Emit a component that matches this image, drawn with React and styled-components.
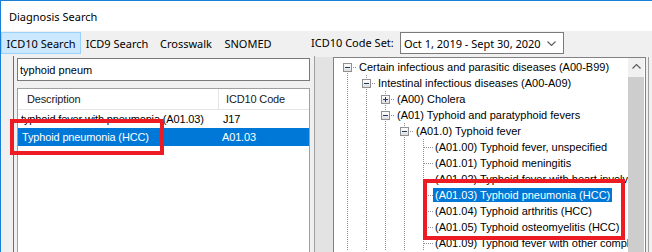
import React from 'react'
import styled, { createGlobalStyle } from 'styled-components'

const GlobalStyle = createGlobalStyle`
  html, body { margin: 0; padding: 0; background: #fff; overflow: hidden; }
  * { box-sizing: border-box; }
`

const uiFont = `"Noto Sans", "Liberation Sans", sans-serif`
const winFont = `"Liberation Sans", Arial, sans-serif`
const dots = '#8f8f8f'

const Screen = styled.div`
  position: relative;
  width: 652px;
  height: 252px;
  overflow: hidden;
`

const Window = styled.div`
  width: 652px;
  height: 252px;
  border-top: 1px solid #1a7fd6;
  border-left: 1px solid #1a7fd6;
  display: flex;
  flex-direction: column;
  background: #fff;
  color: #000;
`

const TitleBar = styled.div`
  height: 30px;
  flex: none;
  display: flex;
  align-items: center;
  padding-left: 8px;
  font: 11px ${uiFont};
`

const Toolbar = styled.div`
  height: 25px;
  flex: none;
  display: flex;
  align-items: flex-start;
  padding-top: 1px;
  background: #f0f0f0;
  font: 11px ${uiFont};
`

const Tab = styled.div`
  width: ${p => p.$w}px;
  height: 22px;
  display: flex;
  align-items: center;
  justify-content: center;
  border: 1px solid ${p => (p.$active ? '#99d1ff' : 'transparent')};
  background: ${p => (p.$active ? '#cce8ff' : 'transparent')};
  white-space: nowrap;
`

const Label = styled.div`
  margin-left: 34px;
  width: 89px;
  line-height: 22px;
  white-space: nowrap;
`

const Combo = styled.div`
  width: 164px;
  height: 22px;
  display: flex;
  align-items: center;
  gap: 4px;
  padding: 0 7px 0 3px;
  border: 1px solid #7a7a7a;
  background: #fff;
  white-space: nowrap;
`

const ComboText = styled.span`
  flex: 1;
  min-width: 0;
  overflow: hidden;
`

const Body = styled.div`
  flex: 1;
  display: flex;
  padding-left: 12px;
  background: #f0f0f0;
  min-height: 0;
`

const LeftPanel = styled.div`
  width: 302px;
  flex: none;
  display: flex;
  flex-direction: column;
  gap: 7px;
  padding: 2px 4px 0 3px;
  border-left: 1px solid #6e6e6e;
  border-right: 1px solid #a0a0a0;
`

const SearchInput = styled.div`
  height: 23px;
  flex: none;
  display: flex;
  align-items: center;
  padding-left: 2px;
  border: 1px solid #7a7a7a;
  background: #fff;
  font: 11px ${winFont};
`

const ListView = styled.div`
  flex: 1;
  border: 1px solid #a0a0a0;
  border-bottom: none;
  background: #fff;
  font: 11px ${winFont};
  letter-spacing: -0.15px;
`

const ListHeader = styled.div`
  height: 21px;
  display: flex;
  border-bottom: 1px solid #e5e5e5;
`

const HeaderCell = styled.div`
  width: ${p => (p.$w ? `${p.$w}px` : 'auto')};
  flex: ${p => (p.$w ? 'none' : '1')};
  line-height: 20px;
  padding-left: ${p => p.$pad}px;
  border-right: ${p => (p.$w ? '1px solid #e5e5e5' : 'none')};
  color: #1a1a1a;
`

const ListRow = styled.div`
  height: 18px;
  display: flex;
  align-items: center;
  white-space: nowrap;
  background: ${p => (p.$selected ? '#0078d7' : 'transparent')};
  color: ${p => (p.$selected ? '#fff' : '#000')};
`

const Cell = styled.div`
  width: ${p => (p.$w ? `${p.$w}px` : 'auto')};
  flex: ${p => (p.$w ? 'none' : '1')};
  padding-left: ${p => p.$pad}px;
  overflow: hidden;
`

const Splitter = styled.div`
  width: 18px;
  flex: none;
  margin-top: 1px;
  background: #e3e3e3;
`

const TreePanel = styled.div`
  width: 313px;
  flex: none;
  margin-top: 1px;
  display: flex;
  border: 1px solid #828282;
  border-bottom: none;
  padding-right: 1px;
  background: #fff;
`

const TreeArea = styled.div`
  width: 294px;
  flex: none;
  overflow: hidden;
  padding: 1px 0 0 4px;
  font: 11px ${winFont};
`

const TreeRow = styled.div`
  height: 16px;
  display: flex;
  align-items: center;
  white-space: nowrap;
`

const vline = (half) =>
  `repeating-linear-gradient(to bottom, ${dots} 0 1px, transparent 1px 2px) 9px ${half ? 8 : 0}px / 1px ${half ? 8 : 16}px no-repeat`

const Guide = styled.div`
  width: 19px;
  height: 16px;
  flex: none;
  display: flex;
  align-items: center;
  background: ${p => (p.$line ? vline(p.$half) : 'none')};
`

const HLine = styled.div`
  flex: 1;
  height: 1px;
  margin-left: ${p => p.$from}px;
  background: repeating-linear-gradient(to right, ${dots} 0 1px, transparent 1px 2px);
`

const Expander = styled.div`
  width: 9px;
  height: 9px;
  margin-left: 5px;
  flex: none;
  display: flex;
  border: 1px solid #919191;
  background: linear-gradient(#ffffff, #dedede);
`

const NodeText = styled.span`
  padding: 0 2px;
  line-height: 14px;
  background: ${p => (p.$selected ? '#0078d7' : 'transparent')};
  color: ${p => (p.$selected ? '#fff' : '#000')};
`

const ScrollBar = styled.div`
  width: 16px;
  flex: none;
  display: flex;
  flex-direction: column;
  background: #f0f0f0;
`

const ScrollArrow = styled.div`
  height: 17px;
  flex: none;
  display: flex;
  align-items: center;
  justify-content: center;
`

const ScrollThumb = styled.div`
  flex: 1;
  margin-top: 2px;
  background: #cdcdcd;
`

const RightEdge = styled.div`
  width: 6px;
  flex: none;
  margin-top: 1px;
  display: flex;
  padding-left: 2px;
`

const EdgeLine = styled.div`
  width: 1px;
  background: #a0a0a0;
`

const Callout = styled.div`
  position: absolute;
  left: ${p => p.$x}px;
  top: ${p => p.$y}px;
  width: ${p => p.$w}px;
  height: ${p => p.$h}px;
  border: 4px solid #ed1c24;
  pointer-events: none;
`

function Chevron({ up }) {
  return (
    <svg width="9" height="5" viewBox="0 0 9 5" style={{ display: 'block', flex: 'none' }}>
      <polyline
        points={up ? '0.5,4.5 4.5,0.5 8.5,4.5' : '0.5,0.5 4.5,4.5 8.5,0.5'}
        fill="none"
        stroke="#606060"
        strokeWidth="1.2"
      />
    </svg>
  )
}

function ExpandBox({ open }) {
  return (
    <Expander>
      <svg width="7" height="7" viewBox="0 0 7 7" style={{ display: 'block' }}>
        <rect x="1" y="3" width="5" height="1" fill="#1f3a66" />
        {!open && <rect x="3" y="1" width="1" height="5" fill="#1f3a66" />}
      </svg>
    </Expander>
  )
}

const nodes = [
  { level: 0, kind: 'open', text: 'Certain infectious and parasitic diseases (A00-B99)' },
  { level: 1, kind: 'open', text: 'Intestinal infectious diseases (A00-A09)' },
  { level: 2, kind: 'closed', text: '(A00) Cholera' },
  { level: 2, kind: 'open', text: '(A01) Typhoid and paratyphoid fevers' },
  { level: 3, kind: 'open', text: '(A01.0) Typhoid fever' },
  { level: 4, kind: 'leaf', text: '(A01.00) Typhoid fever, unspecified' },
  { level: 4, kind: 'leaf', text: '(A01.01) Typhoid meningitis' },
  { level: 4, kind: 'leaf', text: '(A01.02) Typhoid fever with heart involvement' },
  { level: 4, kind: 'leaf', text: '(A01.03) Typhoid pneumonia (HCC)', selected: true },
  { level: 4, kind: 'leaf', text: '(A01.04) Typhoid arthritis (HCC)' },
  { level: 4, kind: 'leaf', text: '(A01.05) Typhoid osteomyelitis (HCC)' },
  { level: 4, kind: 'leaf', text: '(A01.09) Typhoid fever with other complications' },
]

function TreeNode({ node }) {
  const guides = Array.from({ length: node.level }, (_, i) => <Guide key={i} $line />)
  return (
    <TreeRow>
      {guides}
      <Guide $line $half={node.level === 0}>
        {node.kind === 'leaf' ? (
          <HLine $from={10} />
        ) : (
          <>
            <ExpandBox open={node.kind === 'open'} />
            <HLine $from={1} />
          </>
        )}
      </Guide>
      <NodeText $selected={node.selected}>{node.text}</NodeText>
    </TreeRow>
  )
}

export default function App() {
  return (
    <Screen>
      <GlobalStyle />
      <Window>
        <TitleBar>Diagnosis Search</TitleBar>
        <Toolbar>
          <Tab $w={80} $active>ICD10 Search</Tab>
          <Tab $w={72}>ICD9 Search</Tab>
          <Tab $w={66}>Crosswalk</Tab>
          <Tab $w={58}>SNOMED</Tab>
          <Label>ICD10 Code Set:</Label>
          <Combo>
            <ComboText>Oct 1, 2019 - Sept 30, 2020</ComboText>
            <Chevron />
          </Combo>
        </Toolbar>
        <Body>
          <LeftPanel>
            <SearchInput>typhoid pneum</SearchInput>
            <ListView>
              <ListHeader>
                <HeaderCell $w={201} $pad={9}>Description</HeaderCell>
                <HeaderCell $pad={7}>ICD10 Code</HeaderCell>
              </ListHeader>
              <ListRow>
                <Cell $w={201} $pad={3}>typhoid fever with pneumonia (A01.03)</Cell>
                <Cell $pad={4}>J17</Cell>
              </ListRow>
              <ListRow $selected>
                <Cell $w={201} $pad={4}>Typhoid pneumonia (HCC)</Cell>
                <Cell $pad={3}>A01.03</Cell>
              </ListRow>
            </ListView>
          </LeftPanel>
          <Splitter />
          <TreePanel>
            <TreeArea>
              {nodes.map((n, i) => (
                <TreeNode key={i} node={n} />
              ))}
            </TreeArea>
            <ScrollBar>
              <ScrollArrow>
                <Chevron up />
              </ScrollArrow>
              <ScrollThumb />
            </ScrollBar>
          </TreePanel>
          <RightEdge>
            <EdgeLine />
          </RightEdge>
        </Body>
      </Window>
      <Callout $x={10} $y={119} $w={154} $h={36} />
      <Callout $x={423} $y={179} $w={202} $h={61} />
    </Screen>
  )
}
